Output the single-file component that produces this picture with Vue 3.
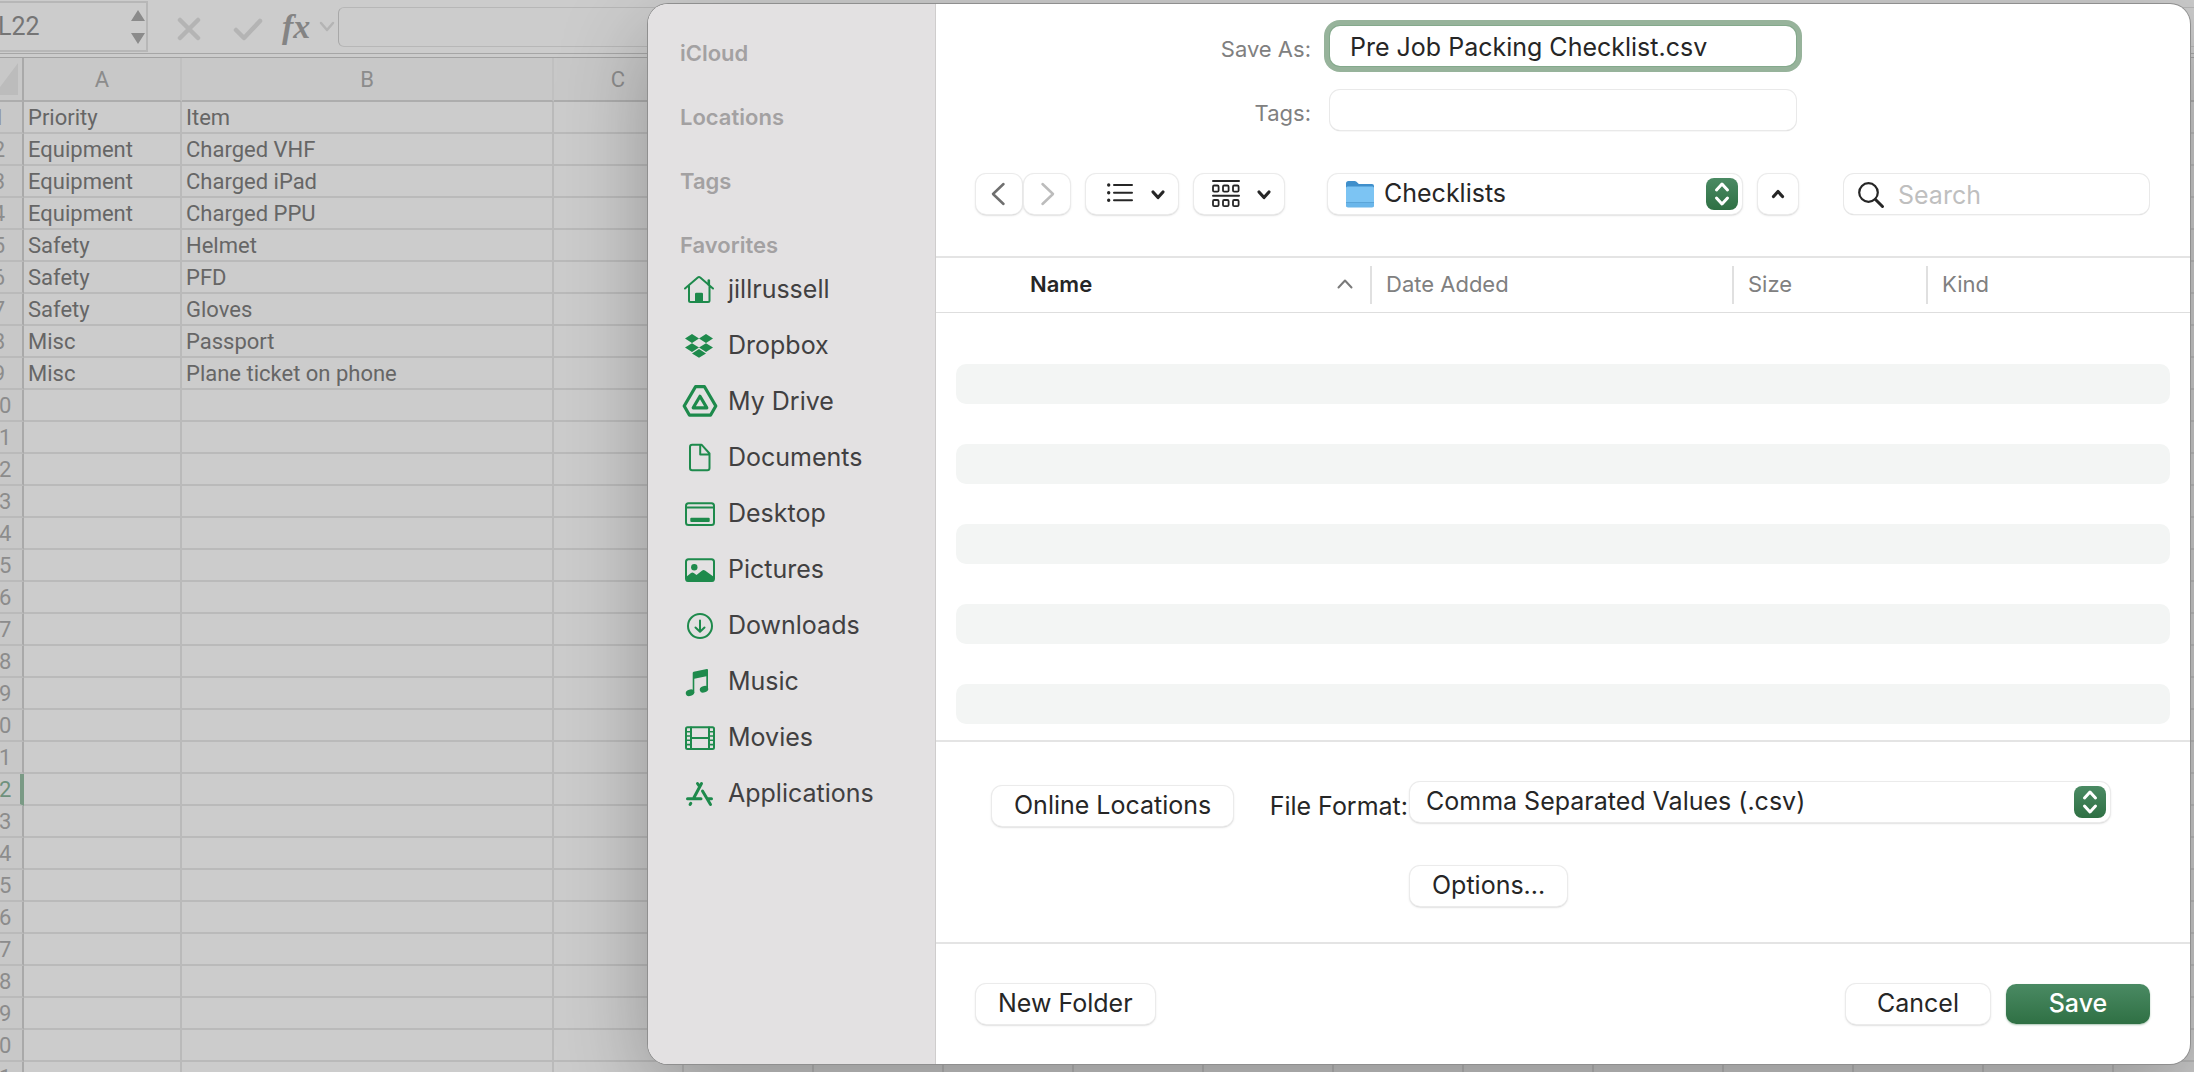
<script setup>
import { ref } from 'vue'

const fileName = ref('Pre Job Packing Checklist.csv')
const tags = ref('')
const query = ref('')
const cellRef = ref('L22')
const formula = ref('')

const sheet = [
  ['Priority', 'Item'],
  ['Equipment', 'Charged VHF'],
  ['Equipment', 'Charged iPad'],
  ['Equipment', 'Charged PPU'],
  ['Safety', 'Helmet'],
  ['Safety', 'PFD'],
  ['Safety', 'Gloves'],
  ['Misc', 'Passport'],
  ['Misc', 'Plane ticket on phone'],
]
const columns = 'ABCDEFGHIJKLMNO'.split('')
const rowCount = 31
const activeRow = 22

const sections = ['iCloud', 'Locations', 'Tags', 'Favorites']
const favorites = [
  'jillrussell', 'Dropbox', 'My Drive', 'Documents', 'Desktop',
  'Pictures', 'Downloads', 'Music', 'Movies', 'Applications',
]
</script>

<template>
  <div class="screen">
    <div class="workbook">
      <div class="formula-bar">
        <div class="name-box">
          <input v-model="cellRef" aria-label="Name box" />
          <svg width="14" height="36" viewBox="0 0 14 36" fill="#8b8b8b"><path d="M7 1l7 11H0zM7 35l7-11H0z" /></svg>
        </div>
        <svg class="marks" width="92" height="30" viewBox="0 0 92 30" fill="none" stroke="#b4b4b4" stroke-width="4.5" stroke-linecap="round" stroke-linejoin="round">
          <path d="M4 6l18 18M22 6L4 24M60 16l8 8L84 7" />
        </svg>
        <span class="fx">fx</span>
        <svg width="14" height="10" viewBox="0 0 14 10" fill="none" stroke="#b4b4b4" stroke-width="2.5" stroke-linecap="round" stroke-linejoin="round"><path d="M1 1l6 7 6-7" /></svg>
        <input v-model="formula" class="formula" aria-label="Formula" />
      </div>

      <table class="grid">
        <colgroup>
          <col class="c-num" /><col class="c-a" /><col class="c-b" />
          <col v-for="n in columns.length - 2" :key="n" class="c-x" />
        </colgroup>
        <thead>
          <tr>
            <th class="corner"><svg width="28" height="32" viewBox="0 0 28 32"><path d="M28 0v32H4z" fill="#bcbcbc" /></svg></th>
            <th v-for="c in columns" :key="c">{{ c }}</th>
          </tr>
        </thead>
        <tbody>
          <tr v-for="r in rowCount" :key="r">
            <th :class="{ active: r === activeRow }">{{ r }}</th>
            <td v-for="(c, i) in columns" :key="c">{{ sheet[r - 1]?.[i] }}</td>
          </tr>
        </tbody>
      </table>
    </div>

    <form class="dialog" @submit.prevent>
      <nav class="sidebar">
        <h2 v-for="s in sections" :key="s">{{ s }}</h2>
        <ul>
          <li v-for="f in favorites" :key="f">
            <a href="#">
              <svg class="ico" width="32" height="32" viewBox="0 0 32 32" fill="none" stroke="#1e8a4c" stroke-width="2" stroke-linecap="round" stroke-linejoin="round">
                <template v-if="f === 'jillrussell'">
                  <path d="M1 15.5L13.8 4.5Q15 3.5 16.2 4.5L29 15.5M5 13v14.5Q5 29 6.5 29h17.500q1.500 0 1.500-1.500V13" />
                  <path d="M11 29v-8q0-1.300 1.300-1.300h5.400q1.300 0 1.300 1.300v8z" fill="#1e8a4c" stroke="none" />
                  <path d="M24.800 7.500v4" stroke-width="2.600" />
                </template>
                <path v-else-if="f === 'Dropbox'" fill="#1e8a4c" stroke="none" d="M8 5l7 4.500-7 4.500-7-4.500zM22 5l7 4.500-7 4.500-7-4.500zM8 14.200l7 4.400-7 4.400-7-4.400zM22 14.200l7 4.400-7 4.400-7-4.400zM15 20l7 4.400-7 4.400-7-4.400z" />
                <path v-else-if="f === 'My Drive'" stroke-width="3.200" d="M11.500 1.700h9L31.800 21l-5.300 9.200h-21L.2 21zM16 11.300l6.800 11.500H9.200z" />
                <path v-else-if="f === 'Documents'" d="M8.200 3.700h9.300l8 8.800V27q0 2.200-2.200 2.200H8.200Q6 29.200 6 27V5.900q0-2.200 2.200-2.200zM16.200 4v9.600h9" />
                <template v-else-if="f === 'Desktop'">
                  <rect x="2" y="6.300" width="28" height="21.700" rx="2.500" />
                  <path d="M2 10.500h28" />
                  <rect x="6.300" y="20.700" width="19.400" height="4.300" rx="1" fill="#1e8a4c" stroke="none" />
                </template>
                <template v-else-if="f === 'Pictures'">
                  <rect x="2" y="6.300" width="28" height="21.700" rx="2.500" />
                  <circle cx="10.300" cy="14.300" r="3.200" fill="#1e8a4c" stroke="none" />
                  <path d="M2 24l5-4q1.400-1 2.800 0l2.700 2 5.700-4.600q1.400-1 2.800 0L30 24v3q0 1.500-1.500 1.500h-25Q2 28.500 2 27z" fill="#1e8a4c" stroke="none" />
                </template>
                <template v-else-if="f === 'Downloads'">
                  <circle cx="16" cy="17" r="12" />
                  <path d="M16 11.500v11M11.500 18.500l4.500 4.300 4.500-4.300" />
                </template>
                <g v-else-if="f === 'Music'" fill="#1e8a4c" stroke="none">
                  <path d="M8.700 8q0-1 1-1.200L22.800 4q1.200-.2 1.200 1v19h-1.700V11.200L10.300 13.800V28H8.700z" />
                  <ellipse cx="6" cy="27.800" rx="4.300" ry="3.200" transform="rotate(-18 6 27.800)" />
                  <ellipse cx="20" cy="24.300" rx="4.300" ry="3.200" transform="rotate(-18 20 24.300)" />
                </g>
                <template v-else-if="f === 'Movies'">
                  <rect x="2" y="6.300" width="28" height="21.700" rx="1.500" />
                  <path d="M7 6.500v21.500M25 6.500v21.500M7 17h18" />
                  <path stroke-width="1.600" d="M2 10.800h5M2 15h5M2 19.300h5M2 23.600h5M25 10.800h5M25 15h5M25 19.300h5M25 23.600h5" />
                </template>
                <path v-else stroke-width="3" d="M17.500 6.500l-7.500 14M13.500 6.500l1.500 2.300M18.500 14l8 13.500M3.500 21.700h13.500M23.500 21.700h4M6.800 26.300l-.7 1.200" />
              </svg>
              <span>{{ f }}</span>
            </a>
          </li>
        </ul>
      </nav>

      <main class="panel">
        <div class="fields">
          <label for="save-as">Save As:</label>
          <input id="save-as" v-model="fileName" class="save-as" />
          <label for="tags">Tags:</label>
          <input id="tags" v-model="tags" />
        </div>

        <div class="toolbar">
          <div class="views">
            <div class="history">
              <button type="button" class="nav" aria-label="Back"><svg width="16" height="24" viewBox="0 0 16 24" fill="none" stroke="#6f6f6f" stroke-width="2.500" stroke-linecap="round" stroke-linejoin="round"><path d="M12.500 2L2 12l10.500 10" /></svg></button>
              <button type="button" class="nav" aria-label="Forward"><svg width="14" height="24" viewBox="0 0 14 24" fill="none" stroke="#bcbcbc" stroke-width="2.500" stroke-linecap="round" stroke-linejoin="round"><path d="M2.500 2L13 12 2.500 22" /></svg></button>
            </div>
            <button type="button" class="view list" aria-label="List view">
              <svg width="28" height="28" viewBox="0 0 28 28" fill="none" stroke="#262626" stroke-width="2" stroke-linecap="round"><path d="M8 5h18M8 12.700h18M8 20.300h18" /><path stroke-width="3.400" d="M2.700 5h.01M2.700 12.700h.01M2.700 20.300h.01" /></svg>
              <svg width="14" height="10" viewBox="0 0 14 10" fill="none" stroke="#262626" stroke-width="3.200" stroke-linecap="round" stroke-linejoin="round"><path d="M2 3l5 5.500L12 3" /></svg>
            </button>
            <button type="button" class="view" aria-label="Group items">
              <svg width="28" height="28" viewBox="0 0 28 28" fill="none" stroke="#262626" stroke-width="2" stroke-linecap="round"><path d="M1 1h26M1 15.700h26" /><g stroke-width="1.800"><rect x="1" y="5.500" width="5.600" height="6.200" rx="1.200" /><rect x="11" y="5.500" width="5.600" height="6.200" rx="1.200" /><rect x="21" y="5.500" width="5.600" height="6.200" rx="1.200" /><rect x="1" y="20" width="5.600" height="6.200" rx="1.200" /><rect x="11" y="20" width="5.600" height="6.200" rx="1.200" /><rect x="21" y="20" width="5.600" height="6.200" rx="1.200" /></g></svg>
              <svg width="14" height="10" viewBox="0 0 14 10" fill="none" stroke="#262626" stroke-width="3.200" stroke-linecap="round" stroke-linejoin="round"><path d="M2 3l5 5.500L12 3" /></svg>
            </button>
          </div>

          <div class="location">
            <div class="popup">
              <select class="folder-select" aria-label="Folder"><option>Checklists</option></select>
              <svg class="folder" width="30" height="30" viewBox="0 0 30 30">
                <path d="M1 4.500Q1 2 3.500 2h6q1.200 0 2 .8L13.800 5H27q2 0 2 2v8H1z" fill="#3f8fcb" />
                <rect x="1" y="7.500" width="28" height="20.500" rx="1.500" fill="#7cc4f3" />
                <path d="M1 23.500h28V26.500q0 2-2 2H3q-2 0-2-2z" fill="#6ab6ea" />
                <path d="M1 23.500h28" stroke="#5ba5d8" stroke-width="1" />
              </svg>
              <span class="stepper"><svg width="16" height="24" viewBox="0 0 16 24" fill="none" stroke="#fff" stroke-width="3" stroke-linecap="round" stroke-linejoin="round"><path d="M2.500 8L8 2l5.500 6M2.500 16l5.500 6 5.500-6" /></svg></span>
            </div>
            <button type="button" class="collapse" aria-label="Collapse"><svg width="14" height="10" viewBox="0 0 14 10" fill="none" stroke="#262626" stroke-width="3.200" stroke-linecap="round" stroke-linejoin="round"><path d="M2.500 7.500L7 2.500l4.500 5" /></svg></button>
          </div>

          <div class="search">
            <svg width="28" height="28" viewBox="0 0 28 28" fill="none" stroke="#262626" stroke-width="2.200" stroke-linecap="round"><circle cx="11.500" cy="11.500" r="9.300" /><path d="M18.500 18.500l7 7" stroke-width="3" /></svg>
            <input v-model="query" type="text" placeholder="Search" aria-label="Search" />
          </div>
        </div>

        <table class="files">
          <colgroup><col class="f-name" /><col class="f-date" /><col class="f-size" /><col /></colgroup>
          <thead>
            <tr>
              <th class="sorted"><div>Name<svg width="16" height="10" viewBox="0 0 16 10" fill="none" stroke="#7a7a7a" stroke-width="2" stroke-linecap="round" stroke-linejoin="round"><path d="M1.500 8.500L8 1.500l6.500 7" /></svg></div></th>
              <th><div>Date Added</div></th>
              <th><div>Size</div></th>
              <th><div>Kind</div></th>
            </tr>
          </thead>
          <tbody>
            <tr v-for="n in 10" :key="n"><td colspan="4"><div class="stripe"></div></td></tr>
          </tbody>
        </table>

        <div class="accessory">
          <div class="locations">
            <button type="button">Online Locations</button>
            <label for="format">File Format:</label>
          </div>
          <div class="format">
            <div class="popup">
              <select id="format"><option>Comma Separated Values (.csv)</option></select>
              <span class="stepper"><svg width="16" height="24" viewBox="0 0 16 24" fill="none" stroke="#fff" stroke-width="3" stroke-linecap="round" stroke-linejoin="round"><path d="M2.500 8L8 2l5.500 6M2.500 16l5.500 6 5.500-6" /></svg></span>
            </div>
            <button type="button">Options...</button>
          </div>
        </div>

        <footer>
          <button type="button">New Folder</button>
          <div class="actions">
            <button type="button" class="wide">Cancel</button>
            <button type="submit" class="wide primary">Save</button>
          </div>
        </footer>
      </main>
    </form>
  </div>
</template>

<style>
body { margin: 0; }
</style>

<style scoped>
* { box-sizing: border-box; }
.screen {
  position: relative;
  height: 100vh;
  overflow: hidden;
  background: #cccccc;
  font-family: Inter, "Liberation Sans", sans-serif;
}
svg { display: block; flex: none; overflow: visible; }
input, select, button { font: inherit; color: inherit; margin: 0; outline: none; }

/* Spreadsheet behind the sheet */
.workbook { font-family: Roboto, "Liberation Sans", sans-serif; }
.formula-bar {
  display: flex;
  align-items: center;
  height: 54px;
  border-bottom: 1px solid #a6a6a6;
}
.name-box {
  display: flex;
  align-items: center;
  justify-content: space-between;
  width: 156px;
  height: 51px;
  margin-left: -8px;
  padding: 0 1px 0 4px;
  border: 2px solid #b7b7b7;
}
.name-box input {
  width: 100px;
  padding: 0;
  border: 0;
  background: none;
  font-size: 25px;
  color: #757575;
}
.marks { margin: 4px 14px 0 28px; }
.fx {
  width: 38px;
  font-family: "Liberation Serif", serif;
  font-style: italic;
  font-weight: 700;
  font-size: 34px;
  line-height: 40px;
  color: #848484;
}
.formula {
  flex: 1;
  height: 40px;
  margin-left: 4px;
  padding: 0 8px;
  border: 1px solid #b7b7b7;
  border-left-color: #a8a8a8;
  border-right: 0;
  border-radius: 6px 0 0 6px;
  background: none;
}
.grid {
  width: 2268px;
  margin: 3px 0 0 -24px;
  border-top: 1px solid #a2a2a2;
  border-collapse: separate;
  border-spacing: 0;
  table-layout: fixed;
  font-size: 22px;
  line-height: 28px;
  color: #666666;
}
.c-num { width: 48px; }
.c-a { width: 158px; }
.c-b { width: 372px; }
.c-x { width: 130px; }
.grid th, .grid td {
  height: 32px;
  padding: 2px 0 0;
  border-right: 2px solid #bababa;
  border-bottom: 2px solid #bababa;
  font-weight: 400;
}
.grid td { padding-left: 4px; }
.grid th { color: #8c8c8c; background: #c8c8c8; }
.grid thead th { height: 44px; border-right-color: #c0c0c0; border-bottom-color: #adadad; }
.grid tbody th { border-right-color: #a9a9a9; }
.grid thead .corner { padding-top: 0; border-right-color: #a9a9a9; }
.corner svg { margin-left: 14px; }
.grid tbody .active {
  color: #6f917c;
  border-right: 4px solid #7a9a85;
  padding-left: 2px;
}

/* Save dialog */
.dialog {
  position: absolute;
  top: 4px;
  left: 648px;
  right: 4px;
  display: flex;
  border-radius: 20px;
  background: #ffffff;
  box-shadow: 0 0 0 1px #8f8f8f, 0 30px 90px rgba(0, 0, 0, 0.28);
}
.sidebar {
  width: 288px;
  padding: 33px 32px 0;
  border-right: 1px solid #cfcdcd;
  border-radius: 20px 0 0 20px;
  background: #e3e1e2;
}
h2 {
  margin: 0 0 32px;
  font-size: 22px;
  line-height: 32px;
  font-weight: 600;
  color: #a3a1a2;
}
h2:last-of-type { margin-bottom: 0; }
ul { margin: 0; padding: 0; list-style: none; }
.sidebar a {
  display: flex;
  align-items: center;
  gap: 12px;
  height: 56px;
  padding-left: 4px;
  font-size: 25px;
  color: #414041;
  text-decoration: none;
}
.panel { flex: 1; min-width: 0; font-size: 25px; color: #262626; }

input, select, button {
  height: 40px;
  border: 0;
  border-radius: 10px;
  background: #ffffff;
}
.panel input { box-shadow: 0 0 0 1px #e9e9e9, 0 1px 1px #a8a8a8; padding: 0 20px; }
button, .panel select {
  box-shadow: 0 0 0 1px #ebebeb, 0 1px 1px #a8a8a8, 0 1px 3px #d0d0d0;
}
button { padding: 0 22px 2px; line-height: 38px; }

.fields {
  display: grid;
  grid-template-columns: 1fr 466px 1fr;
  row-gap: 24px;
  padding: 22px 0 44px;
}
.fields label {
  grid-column: 1;
  padding-right: 19px;
  text-align: right;
  font-size: 22px;
  line-height: 46px;
  height: 40px;
  color: #808080;
}
.fields input { grid-column: 2; min-width: 0; }
.fields .save-as { padding-top: 2px; box-shadow: 0 0 0 1px #84a98c, 0 0 0 6px #97b39b; }

.toolbar {
  display: grid;
  grid-template-columns: 1fr 470px 1fr;
  padding-bottom: 42px;
  border-bottom: 2px solid #e4e4e4;
}
.views { display: flex; gap: 16px; padding-left: 40px; }
.history { display: flex; gap: 2px; }
.nav { display: flex; align-items: center; justify-content: center; width: 46px; padding: 0; }
.view { display: flex; align-items: center; gap: 17px; width: 90px; padding: 0 12px 0 18px; }
.list { width: 92px; padding-left: 20px; }
.location { display: flex; gap: 16px; }
.popup { position: relative; flex: 1; }
.popup select {
  display: block;
  width: 100%;
  padding: 0 44px 2px 16px;
  appearance: none;
}
.popup .folder-select { padding-left: 56px; }
.folder { position: absolute; top: 5px; left: 17px; pointer-events: none; }
.stepper {
  position: absolute;
  top: 4px;
  right: 4px;
  display: flex;
  align-items: center;
  justify-content: center;
  width: 32px;
  height: 32px;
  border-radius: 8px;
  background: linear-gradient(#4a8a63, #2f7044);
  pointer-events: none;
}
.collapse { display: flex; align-items: center; justify-content: center; width: 40px; padding: 0; }
.search { position: relative; padding: 0 41px 0 46px; }
.search svg { position: absolute; top: 7px; left: 59px; }
.search input { display: block; width: 100%; padding: 2px 16px 0 54px; }
.search input::placeholder { color: #bfbfbf; opacity: 1; }

.files { width: 100%; border-collapse: separate; border-spacing: 0; table-layout: fixed; border-bottom: 2px solid #e4e4e4; padding-bottom: 16px; }
.f-name { width: 434px; }
.f-date { width: 362px; }
.f-size { width: 194px; }
.files th {
  height: 55px;
  padding: 0;
  border-bottom: 1px solid #dedede;
  text-align: left;
  font-weight: 400;
  font-size: 22px;
  color: #808080;
}
.files th div {
  display: flex;
  align-items: center;
  justify-content: space-between;
  height: 38px;
  padding: 0 17px 2px 14px;
  border-left: 2px solid #e0e0e0;
}
.files .sorted { font-weight: 600; color: #262626; }
.files .sorted div { border-left: 0; padding-left: 94px; }
.files td { padding: 0 20px; }
.files tbody tr:first-child td { padding-top: 11px; }
.stripe { height: 40px; border-radius: 10px; }
.files tr:nth-child(even) .stripe { background: #f3f5f4; }

.accessory { display: flex; padding: 40px 80px 36px 56px; border-bottom: 2px solid #e4e4e4; }
.locations {
  display: flex;
  align-items: center;
  justify-content: space-between;
  width: 418px;
  height: 40px;
  margin-top: 4px;
  padding-right: 2px;
}
.format { display: flex; flex-direction: column; align-items: flex-start; gap: 44px; flex: 1; }
.format .popup { width: 100%; }

footer { display: flex; justify-content: space-between; padding: 40px; }
.actions { display: flex; gap: 16px; }
.wide { width: 144px; }
.primary {
  color: #ffffff;
  font-weight: 500;
  background: linear-gradient(#4a8a63, #2f7044);
  box-shadow: 0 1px 2px #a9c4b1;
}
</style>
